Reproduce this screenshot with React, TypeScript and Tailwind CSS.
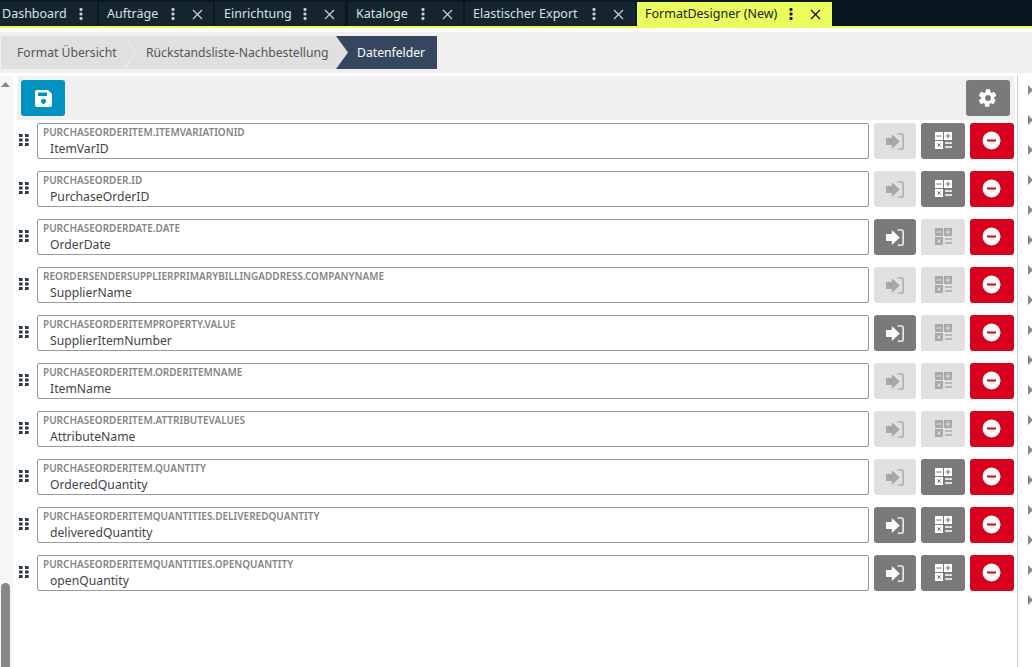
import React from "react";

const F = "font-['Noto_Sans','Open_Sans',sans-serif]";

function Kebab({ dark }: { dark?: boolean }) {
  return (
    <svg width="4" height="12" viewBox="0 0 4 12" className="shrink-0">
      <g fill={dark ? "#111" : "#c6ced2"}>
        <rect x="0.5" y="0" width="3" height="3" rx="1" />
        <rect x="0.5" y="4.5" width="3" height="3" rx="1" />
        <rect x="0.5" y="9" width="3" height="3" rx="1" />
      </g>
    </svg>
  );
}
function Close({ dark }: { dark?: boolean }) {
  return (
    <svg width="11" height="11" viewBox="0 0 11 11" className="shrink-0">
      <path d="M1 1l9 9M10 1l-9 9" stroke={dark ? "#111" : "#c6ced2"} strokeWidth="1.3" fill="none" />
    </svg>
  );
}

const tabs = [
  { t: "Dashboard", w: "w-[97px]", pl: "pl-[2px]", close: false, mr: "mr-[2px]", pr: "pr-[14px]" },
  { t: "Aufträge", w: "w-[114px]", pl: "pl-[8px]", close: true, mr: "mr-[2px]", pr: "pr-[10px]" },
  { t: "Einrichtung", w: "w-[130px]", pl: "pl-[9px]", close: true, mr: "mr-[3px]", pr: "pr-[10px]" },
  { t: "Kataloge", w: "w-[115px]", pl: "pl-[8px]", close: true, mr: "mr-[2px]", pr: "pr-[10px]" },
  { t: "Elastischer Export", w: "w-[170px]", pl: "pl-[8px]", close: true, mr: "mr-[2px]", pr: "pr-[11px]" },
];

function Grip() {
  return (
    <svg width="10" height="12" viewBox="0 0 10 12" className="shrink-0">
      <g fill="#2a3a4a">
        <rect x="0" y="0" width="3.6" height="3" />
        <rect x="6" y="0" width="3.6" height="3" />
        <rect x="0" y="4.5" width="3.6" height="3" />
        <rect x="6" y="4.5" width="3.6" height="3" />
        <rect x="0" y="9" width="3.6" height="3" />
        <rect x="6" y="9" width="3.6" height="3" />
      </g>
    </svg>
  );
}

function ImportIcon({ color }: { color: string }) {
  return (
    <svg width="18" height="17" viewBox="0 0 17 16" className="mt-[1px]">
      <path d="M0 4.800h5.500V1L13 8l-7.500 7v-3.800H0z" fill={color} />
      <path d="M11 .8h3.400a1.800 1.800 0 0 1 1.800 1.800v10.800a1.800 1.800 0 0 1-1.800 1.800H11" stroke={color} strokeWidth="1.300" fill="none" />
    </svg>
  );
}
function CalcIcon({ color, bg }: { color: string; bg: string }) {
  return (
    <svg width="17" height="17" viewBox="0 0 17 17">
      <rect x="0" y="0" width="8" height="8" fill={color} />
      <rect x="9" y="0" width="8" height="8" fill={color} />
      <rect x="0" y="9" width="8" height="8" fill={color} />
      <path d="M1.500 4h5M10.500 4h5M13 1.500v5" stroke={bg} strokeWidth="1.100" />
      <path d="M2.300 11.300l3.400 3.400M5.700 11.300l-3.400 3.400" stroke={bg} strokeWidth="1" />
      <path d="M10 11h7M10 15h7" stroke={color} strokeWidth="1.400" />
    </svg>
  );
}

const rows = [
  { l: "PURCHASEORDERITEM.ITEMVARIATIONID", v: "ItemVarID", a: false, b: true },
  { l: "PURCHASEORDER.ID", v: "PurchaseOrderID", a: false, b: true },
  { l: "PURCHASEORDERDATE.DATE", v: "OrderDate", a: true, b: false },
  { l: "REORDERSENDERSUPPLIERPRIMARYBILLINGADDRESS.COMPANYNAME", v: "SupplierName", a: false, b: false },
  { l: "PURCHASEORDERITEMPROPERTY.VALUE", v: "SupplierItemNumber", a: true, b: false },
  { l: "PURCHASEORDERITEM.ORDERITEMNAME", v: "ItemName", a: false, b: false },
  { l: "PURCHASEORDERITEM.ATTRIBUTEVALUES", v: "AttributeName", a: false, b: false },
  { l: "PURCHASEORDERITEM.QUANTITY", v: "OrderedQuantity", a: false, b: true },
  { l: "PURCHASEORDERITEMQUANTITIES.DELIVEREDQUANTITY", v: "deliveredQuantity", a: true, b: true },
  { l: "PURCHASEORDERITEMQUANTITIES.OPENQUANTITY", v: "openQuantity", a: true, b: true },
];

export default function App() {
  return (
    <div className={`${F} w-[1032px] h-[667px] overflow-hidden bg-white flex flex-col`}>
      {/* top tabs */}
      <div className="h-[28px] shrink-0 bg-[#0b1720] border-b-2 border-[#e9fd5c] pt-[2px] flex text-[12.5px]">
        {tabs.map((t) => (
          <div key={t.t} className={`${t.w} ${t.pl} ${t.mr} h-[24px] bg-[#14252f] text-[#d7e1e5] flex items-center shrink-0`}>
            <span className="whitespace-nowrap flex-1 pt-[1px]">{t.t}</span>
            <span className={`flex items-center gap-[17px] ${t.pr}`}>
              <Kebab />
              {t.close && <Close />}
            </span>
          </div>
        ))}
        <div className="w-[195px] h-[24px] bg-[#e9fd5c] text-[#222] flex items-center pl-[8px] shrink-0">
          <span className="whitespace-nowrap flex-1 pt-[1px]">FormatDesigner (New)</span>
          <span className="flex items-center gap-[17px] pr-[11px]">
            <Kebab dark />
            <Close dark />
          </span>
        </div>
      </div>

      {/* breadcrumbs */}
      <div className="mt-[4px] h-[41px] shrink-0 bg-[#f0f0f0] py-[4px] pl-[1px] flex text-[12.2px]">
        <div className="relative w-[123px] h-[33px] bg-[#e0e0e0] text-[#555] flex items-center pl-[16px] pt-[1px] whitespace-nowrap">
          Format Übersicht
          <svg width="14" height="33" viewBox="0 0 14 33" className="absolute left-[123px] top-0 z-10">
            <path d="M0 0l12 16.500L0 33z" fill="#e0e0e0" />
            <path d="M0 0l12 16.500L0 33" fill="none" stroke="#f0f0f0" strokeWidth="1" />
          </svg>
        </div>
        <div className="w-[212px] h-[33px] bg-[#e0e0e0] text-[#555] flex items-center pl-[22px] pt-[1px] whitespace-nowrap">
          Rückstandsliste-Nachbestellung
        </div>
        <div className="relative w-[101px] h-[33px] bg-[#35465f] text-white flex items-center pl-[21px] pt-[1px] whitespace-nowrap">
          <svg width="12" height="33" viewBox="0 0 12 33" className="absolute left-0 top-0">
            <path d="M0 0l12 16.500L0 33z" fill="#e0e0e0" />
          </svg>
          Datenfelder
        </div>
      </div>

      {/* body */}
      <div className="flex-1 min-h-0 flex pt-[3px]">
        {/* left scrollbar */}
        <div className="w-[13px] shrink-0 bg-[#f7f7f7] relative flex flex-col justify-between items-center">
          <svg width="9" height="5" viewBox="0 0 9 5" className="mt-[6px] mr-[3px]">
            <path d="M4.500 0l4.500 5H0z" fill="#888" />
          </svg>
          <div className="w-[9px] h-[84px] bg-[#888] rounded-t-[5px] mr-[3px]" />
        </div>

        {/* main */}
        <div className="w-[1002px] shrink-0 pl-[4px]">
          <div className="h-[44px] bg-[#f0f0f0] flex items-center justify-between pl-[4px] pr-[5px]">
            <button className="w-[44px] h-[36px] bg-[#0093bf] rounded-[3px] flex items-center justify-center">
              <svg width="17" height="17" viewBox="0 0 17 17">
                <path fillRule="evenodd" fill="#fff" d="M2 0h11l4 4v11a2 2 0 0 1-2 2H2a2 2 0 0 1-2-2V2a2 2 0 0 1 2-2zm1 2.500v3.500h9V2.500zM8.500 8.700a2.600 2.600 0 1 0 .01 0z" />
              </svg>
            </button>
            <button className="w-[44px] h-[36px] bg-[#7a7a7a] rounded-[3px] flex items-center justify-center">
              <svg width="20" height="20" viewBox="0 0 24 24" className="mb-[1px]">
                <path fill="#fff" d="M21.400 14.200l-2.100-1.200a7.600 7.600 0 0 0 0-2l2.100-1.200a1 1 0 0 0 .4-1.300l-2-3.400a1 1 0 0 0-1.300-.4l-2.100 1.200a7.600 7.600 0 0 0-1.700-1V2.500a1 1 0 0 0-1-1h-3.400a1 1 0 0 0-1 1v2.400a7.600 7.600 0 0 0-1.700 1L4.500 4.700a1 1 0 0 0-1.300.4l-2 3.400a1 1 0 0 0 .4 1.300L3.700 11a7.600 7.600 0 0 0 0 2l-2.100 1.200a1 1 0 0 0-.4 1.300l2 3.400a1 1 0 0 0 1.300.4l2.100-1.200a7.600 7.600 0 0 0 1.700 1v2.400a1 1 0 0 0 1 1h3.400a1 1 0 0 0 1-1v-2.400a7.600 7.600 0 0 0 1.700-1l2.100 1.200a1 1 0 0 0 1.300-.4l2-3.400a1 1 0 0 0-.4-1.300zM12 15.500a3.500 3.500 0 1 1 0-7 3.500 3.500 0 0 1 0 7z" />
              </svg>
            </button>
          </div>

          <div className="pt-[3px] flex flex-col gap-[12px]">
            {rows.map((r) => (
              <div key={r.l} className="h-[36px] flex items-center">
                <div className="w-[20px] pl-[2px] shrink-0 flex mb-[2px]"><Grip /></div>
                <div className="w-[832px] h-[36px] shrink-0 border border-[#999] rounded-[2px] bg-white pl-[5px] leading-none overflow-hidden">
                  <div className="text-[10px] font-semibold text-[#858585] mt-[2px] h-[12px] leading-[12px] whitespace-nowrap">{r.l}</div>
                  <div className="text-[12.2px] text-[#444] pl-[7px] mt-[2px] leading-[17px] whitespace-nowrap">{r.v}</div>
                </div>
                <div className={`ml-[5px] w-[42px] h-[36px] rounded-[3px] flex items-center justify-center ${r.a ? "bg-[#7a7a7a]" : "bg-[#e0e0e0]"}`}>
                  <ImportIcon color={r.a ? "#ffffff" : "#a8a8a8"} />
                </div>
                <div className={`ml-[5px] w-[44px] h-[36px] rounded-[3px] flex items-center justify-center ${r.b ? "bg-[#7a7a7a]" : "bg-[#e0e0e0]"}`}>
                  <div className="mb-[1px] flex"><CalcIcon color={r.b ? "#ffffff" : "#a8a8a8"} bg={r.b ? "#7a7a7a" : "#e0e0e0"} /></div>
                </div>
                <div className="ml-[5px] w-[44px] h-[36px] rounded-[3px] bg-[#d7001f] flex items-center justify-center">
                  <svg width="19" height="19" viewBox="0 0 19 19" className="mb-[2px] mr-[1px]">
                    <circle cx="9.500" cy="9.500" r="9" fill="#fff" />
                    <rect x="5" y="8.500" width="9" height="2" fill="#d7001f" />
                  </svg>
                </div>
              </div>
            ))}
          </div>
        </div>

        {/* right rail */}
        <div className="flex-1 ml-[2px] border-l border-[#ccc] pl-[10px] pt-[9px] flex flex-col gap-[20px]">
          {Array.from({ length: 18 }).map((_, i) => (
            <svg key={i} width="5" height="10" viewBox="0 0 5 10" className="shrink-0">
              <path d="M0 0l5 5-5 5z" fill="#888" />
            </svg>
          ))}
        </div>
      </div>
    </div>
  );
}
